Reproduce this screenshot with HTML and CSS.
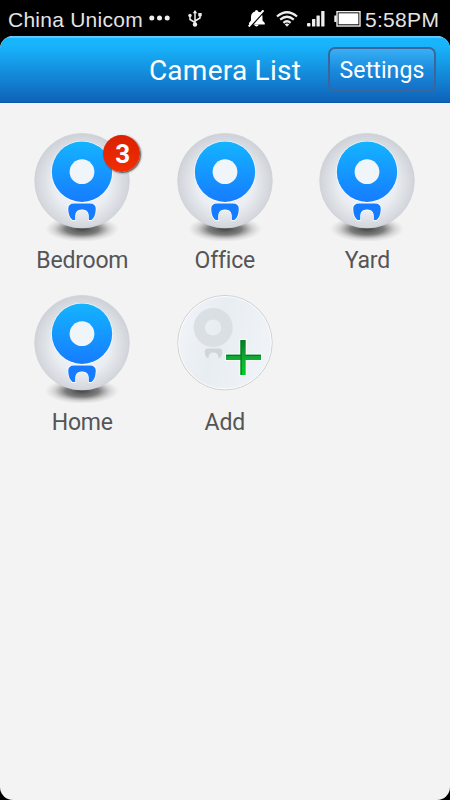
FILE: index.html
```html
<!DOCTYPE html>
<html lang="en">
<head>
    <meta charset="UTF-8">
    <meta name="viewport" content="width=device-width, initial-scale=1.0">
    <title>Camera List</title>
    <link rel="stylesheet" href="styles.css">
</head>
<body>
    <!-- Shared camera icon -->
    <svg class="defs" width="0" height="0">
        <defs>
            <radialGradient id="ball" cx="50%" cy="52%" r="50%">
                <stop offset="0" stop-color="#f6f9fc"/>
                <stop offset="0.6" stop-color="#eaeef2"/>
                <stop offset="1" stop-color="#d0d4da"/>
            </radialGradient>
            <linearGradient id="lens" x1="0" y1="0" x2="0" y2="1">
                <stop offset="0" stop-color="#14b4ff"/>
                <stop offset="1" stop-color="#167cff"/>
            </linearGradient>
            <radialGradient id="shadow">
                <stop offset="0" stop-color="#444" stop-opacity="1"/>
                <stop offset="0.45" stop-color="#555" stop-opacity="0.75"/>
                <stop offset="0.75" stop-color="#777" stop-opacity="0.25"/>
                <stop offset="1" stop-color="#999" stop-opacity="0"/>
            </radialGradient>
            <linearGradient id="pale" x1="0" y1="0" x2="1" y2="0.3">
                <stop offset="0" stop-color="#f2f5f9"/>
                <stop offset="0.5" stop-color="#e8edf2"/>
                <stop offset="1" stop-color="#eff3f7"/>
            </linearGradient>
            <linearGradient id="green" x1="0" y1="0" x2="0" y2="1">
                <stop offset="0" stop-color="#087a20"/>
                <stop offset="0.5" stop-color="#12a936"/>
                <stop offset="1" stop-color="#00d020"/>
            </linearGradient>
        </defs>
        <symbol id="camera" viewBox="0 0 96 108">
            <ellipse cx="48" cy="96" rx="37" ry="13" fill="url(#shadow)"/>
            <circle cx="48" cy="47.7" r="47.3" fill="url(#ball)" stroke="#cdd0d4" stroke-width="0.7"/>
            <path d="M40 70.500H56Q61.800 70.500 61.800 76Q61.500 84 57.500 87H54.800V82.500Q54.300 76.500 48.500 76.500H47.500Q41.700 76.500 41.200 82.500V87H38.500Q34.500 84 34.200 76Q34.200 70.500 40 70.500Z" fill="#167cff" stroke="#fff" stroke-width="1.400" paint-order="stroke"/>
            <circle cx="48" cy="38.700" r="30.800" fill="#fff"/>
            <circle cx="48" cy="38.700" r="30.200" fill="url(#lens)"/>
            <circle cx="48" cy="38.700" r="12.400" fill="#f0f5fa"/>
        </symbol>
    </svg>

    <div class="status-bar">
        <span class="carrier">China Unicom</span>
        <svg class="dots" width="21" height="6" viewBox="0 0 21 6" fill="#eee">
            <circle cx="2.800" cy="3" r="2.500"/>
            <circle cx="10.500" cy="3" r="2.500"/>
            <circle cx="18.200" cy="3" r="2.500"/>
        </svg>
        <svg class="usb" width="14" height="17" viewBox="0 0 14 17" fill="none" stroke="#eee" stroke-width="1.500">
            <path d="M7 2V15M7 12.500L2 9.500V5.500M7 11L12 8V4.500"/>
            <path d="M7 0L9.200 3.300H4.800Z" fill="#eee" stroke="none"/>
            <circle cx="7" cy="14.500" r="2.200" fill="#eee" stroke="none"/>
            <circle cx="2" cy="5.500" r="1.700" fill="#eee" stroke="none"/>
            <path d="M10.300 3H13.700V6.300H10.300Z" fill="#eee" stroke="none"/>
        </svg>
        <div class="indicators">
            <svg class="bell" width="17" height="17" viewBox="0 0 17 17">
                <path d="M8.500 0Q10 0 10 1.500Q14.500 2.500 14.500 7V10.500L16.800 13V14.500H1V13L3 10.500V7Q3 2.500 7 1.500Q7 0 8.500 0ZM6.300 14.800H10.700Q10.200 16.500 8.500 16.500Q6.800 16.500 6.300 14.800Z" fill="#fff"/>
                <path d="M1.800 17L16.600 0.500" stroke="#000" stroke-width="2.200"/>
                <path d="M0.700 16.500L15.500 0.300" stroke="#fff" stroke-width="2"/>
            </svg>
            <svg class="wifi" width="22" height="16" viewBox="0 0 22 16" fill="none" stroke="#eee" stroke-width="2.200">
                <path d="M1 5.500Q11 -3 21 5.500M4.200 8.700Q11 2.800 17.800 8.700M7.400 11.800Q11 8.700 14.600 11.800"/>
                <path d="M8.700 13.300Q11 11.700 13.300 13.300L11 15.800Z" fill="#eee" stroke="none"/>
            </svg>
            <svg class="signal" width="18" height="16" viewBox="0 0 18 16" fill="#eee">
                <rect x="0" y="12" width="3.500" height="3.500" rx="1"/>
                <rect x="5" y="8" width="3.300" height="7.500" rx="0.500"/>
                <rect x="9.500" y="4.500" width="3.300" height="11" rx="0.500"/>
                <rect x="14.200" y="0" width="3.300" height="15.500" rx="0.500"/>
            </svg>
            <svg class="battery" width="27" height="16" viewBox="0 0 27 16">
                <path d="M2.700 4.500H0.300V11H2.700" fill="#eee"/>
                <rect x="3" y="0.700" width="23" height="14.300" fill="#000" stroke="#eee" stroke-width="1.400"/>
                <rect x="4.600" y="2.300" width="19.800" height="11" fill="#fff"/>
            </svg>
            <span class="time">5:58PM</span>
        </div>
    </div>

    <div class="screen">
        <div class="header">
            <h1>Camera List</h1>
            <button class="settings" type="button">Settings</button>
        </div>
        <div class="cameras">
            <div class="camera">
                <div class="icon">
                    <svg width="96" height="108"><use href="#camera"/></svg>
                    <span class="badge">3</span>
                </div>
                <span class="name">Bedroom</span>
            </div>
            <div class="camera">
                <div class="icon"><svg width="96" height="108"><use href="#camera"/></svg></div>
                <span class="name">Office</span>
            </div>
            <div class="camera">
                <div class="icon"><svg width="96" height="108"><use href="#camera"/></svg></div>
                <span class="name">Yard</span>
            </div>
            <div class="camera">
                <div class="icon"><svg width="96" height="108"><use href="#camera"/></svg></div>
                <span class="name">Home</span>
            </div>
            <div class="camera">
                <div class="icon">
                    <svg width="96" height="108" viewBox="0 0 96 108">
                        <circle cx="48" cy="47.700" r="47.200" fill="url(#pale)" stroke="#c9cbcc" stroke-width="0.900"/>
                        <circle cx="48" cy="47.700" r="46.200" fill="none" stroke="#f9fbfc" stroke-width="1"/>
                        <circle cx="36.200" cy="32.500" r="13.800" fill="none" stroke="#d9dfe2" stroke-width="11.400"/>
                        <path d="M31 53.500H42Q45.500 53.500 45.200 57.500Q44.800 62.500 41.500 63.300Q41.500 57.500 36.500 57.500Q31.500 57.500 31.500 63.300Q28.200 62.500 27.800 57.500Q27.500 53.500 31 53.500Z" fill="#cfd5d8"/>
                        <path d="M63.500 45H68.700V59.700H84V64.900H68.700V80H63.500V64.900H49V59.700H63.500Z" fill="url(#green)" stroke="#fff" stroke-width="1.800" paint-order="stroke"/>
                        <path d="M49 60.300H63.500M68.700 60.300H84M64.100 45V80" stroke="#067a22" stroke-width="1.200"/>
                    </svg>
                </div>
                <span class="name">Add</span>
            </div>
        </div>
    </div>
</body>
</html>
```
FILE: styles.css
```css
* {
    box-sizing: border-box;
}

body {
    margin: 0;
    height: 800px;
    background: #000;
    font-family: Roboto, sans-serif;
    display: flex;
    flex-direction: column;
    overflow: hidden;
}

svg {
    display: block;
    flex: none;
}

.defs {
    position: absolute;
}

/* Phone status bar */
.status-bar {
    height: 36px;
    flex: none;
    display: flex;
    align-items: center;
    padding: 2px 9px 0 8px;
    color: #e4e4e4;
    font-family: "Liberation Sans", Arial, sans-serif;
    font-size: 21px;
    line-height: 34px;
    white-space: nowrap;
}

.carrier {
    width: 141px;
    padding-top: 1px;
    letter-spacing: 0.25px;
}

.dots {
    margin-bottom: 2px;
}

.usb {
    margin: 0 0 2px 18px;
}

.indicators {
    display: flex;
    align-items: center;
    margin-left: auto;
}

.bell {
    margin-bottom: 1px;
}

.wifi {
    margin: 0 0 1px 11px;
}

.signal {
    margin-left: 9px;
}

.battery {
    margin-left: 9px;
}

.time {
    width: 76px;
    margin-left: 4px;
    padding-top: 1px;
    letter-spacing: 0.3px;
}

/* App window */
.screen {
    flex: 1;
    background: #f3f3f3;
    border-radius: 13px;
    overflow: hidden;
}

.header {
    height: 67px;
    display: grid;
    grid-template-columns: 1fr auto 1fr;
    align-items: center;
    padding-right: 14px;
    border-top: 2px solid #62c4fb;
    border-bottom: 1px solid #0857a9;
    background: linear-gradient(#18b7ff 0%, #18b2fa 14%, #0f62b8 100%);
}

.header h1 {
    grid-column: 2;
    margin: 1px 0 0 14px;
    color: #fff;
    font-size: 28px;
    font-weight: 400;
    letter-spacing: 0.25px;
    white-space: nowrap;
}

.settings {
    justify-self: end;
    width: 108px;
    height: 45px;
    margin-bottom: 2px;
    padding: 2px 0 0;
    border: 2px solid #3c659b;
    border-radius: 7px;
    background: linear-gradient(#38b0f5, #1b8bdd 50%, #1371c8);
    color: #fff;
    font-family: Roboto, sans-serif;
    font-size: 23px;
    letter-spacing: 0.1px;
}

/* Camera grid */
.cameras {
    display: grid;
    grid-template-columns: repeat(3, 142.5px);
    grid-auto-rows: 162px;
    justify-content: center;
    padding: 30px 0.4px 0 0;
}

.camera {
    display: flex;
    flex-direction: column;
    align-items: center;
}

.icon {
    position: relative;
}

.badge {
    position: absolute;
    top: 2px;
    left: 69px;
    width: 37px;
    height: 37px;
    padding-left: 2px;
    border-radius: 50%;
    background: linear-gradient(#d92203, #f32d00);
    box-shadow: 1px 1px 2px #444;
    color: #fff;
    font-size: 26px;
    font-weight: 700;
    line-height: 38px;
    text-align: center;
}

.name {
    margin-top: 5px;
    color: #555;
    font-size: 23px;
    line-height: 29px;
    letter-spacing: -0.2px;
}
```
